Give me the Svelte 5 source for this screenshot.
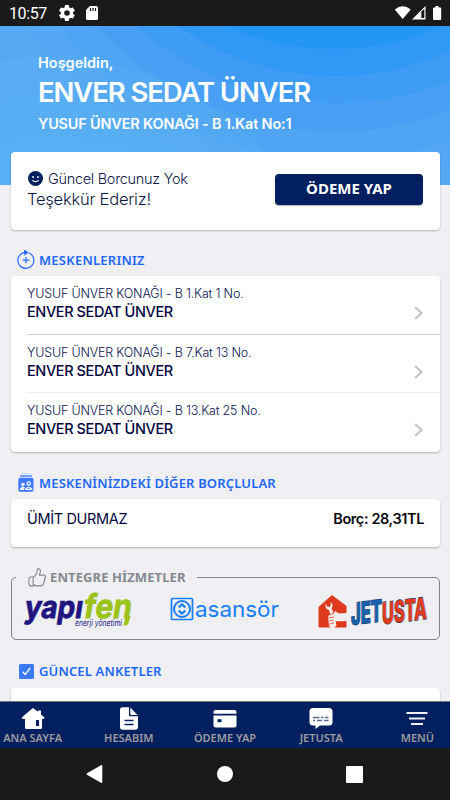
<script lang="ts">
	type Home = { id: number; address: string; owner: string };

	const homes: Home[] = [
		{ id: 1, address: 'YUSUF ÜNVER KONAĞI - B 1.Kat 1 No.', owner: 'ENVER SEDAT ÜNVER' },
		{ id: 2, address: 'YUSUF ÜNVER KONAĞI - B 7.Kat 13 No.', owner: 'ENVER SEDAT ÜNVER' },
		{ id: 3, address: 'YUSUF ÜNVER KONAĞI - B 13.Kat 25 No.', owner: 'ENVER SEDAT ÜNVER' }
	];

	const tabs = [
		{ icon: 'home', label: 'ANA SAYFA' },
		{ icon: 'file', label: 'HESABIM' },
		{ icon: 'card', label: 'ÖDEME YAP' },
		{ icon: 'chat', label: 'JETUSTA' },
		{ icon: 'menu', label: 'MENÜ' }
	];
</script>

<div class="phone">
	<div class="status">
		<span class="status__time">10:57</span>
		<svg class="status__gear" width="16" height="16" viewBox="2 2 20 20">
			<path fill="#fff" fill-rule="evenodd" d="M19.4 13a7.500 7.500 0 0 0 0-2l2.100-1.600a.5.500 0 0 0 .1-.6l-2-3.500a.5.500 0 0 0-.6-.2l-2.500 1a7.300 7.300 0 0 0-1.700-1l-.4-2.600a.5.500 0 0 0-.5-.5h-4a.5.500 0 0 0-.5.500L9 5.100a7.700 7.700 0 0 0-1.700 1l-2.500-1a.5.500 0 0 0-.6.200l-2 3.500a.5.500 0 0 0 .1.600L4.500 11a8 8 0 0 0 0 2l-2.200 1.600a.5.500 0 0 0-.1.600l2 3.500a.5.500 0 0 0 .6.200l2.500-1a7.300 7.300 0 0 0 1.700 1l.4 2.600a.5.500 0 0 0 .5.500h4a.5.500 0 0 0 .5-.5l.4-2.600a7.700 7.700 0 0 0 1.700-1l2.500 1a.5.500 0 0 0 .6-.2l2-3.500a.5.500 0 0 0-.1-.6zM12 15.500a3.500 3.500 0 1 1 0-7 3.500 3.500 0 0 1 0 7z" />
		</svg>
		<svg class="status__sd" width="12" height="14" viewBox="0 0 12 14">
			<path fill="#fff" d="M4 0h6.500Q12 0 12 1.500v11q0 1.500-1.500 1.500h-9Q0 14 0 12.500V4z" />
			<path d="M4.500 2v3M7 2v3M9.500 2v3" stroke="#1a1a1a" stroke-width="1.200" />
		</svg>
		<svg class="status__signal" width="50" height="16" viewBox="0 0 50 16">
			<path fill="#fff" d="M.8 4.600Q8.700-2.300 16.700 4.600L8.700 14z" />
			<path fill="#fff" d="M31.500 1v13.500H18z" />
			<path fill="#1a1a1a" d="M27.300 6.500l3-2.500v9h-3z" />
			<path fill="#fff" d="M41.500 1h3v1.500h1.700q1 0 1 1V14q0 1-1 1H40q-1 0-1-1V3.500q0-1 1-1h1.500z" />
		</svg>
	</div>

	<header class="hero">
		<svg class="hero__waves" viewBox="0 26 450 159" preserveAspectRatio="none">
			<rect y="26" width="450" height="159" fill="#55a9f3" />
			<circle cx="340" cy="-200" r="386" fill="#54a7f3" />
			<circle cx="338" cy="-200" r="359" fill="#4fa4f3" />
			<circle cx="337" cy="-200" r="331" fill="#489ff3" />
			<circle cx="337" cy="-200" r="303" fill="#3e9cf4" />
			<circle cx="336" cy="-200" r="276" fill="#3099f5" />
			<circle cx="334" cy="-215" r="264" fill="#2395f3" />
			<g fill="#5cb5f5" fill-opacity=".28">
				<circle cx="45" cy="357" r="300" />
				<circle cx="48" cy="397" r="298" />
				<circle cx="50" cy="437" r="297" />
			</g>
		</svg>
		<p class="hero__hello">Hoşgeldin,</p>
		<h1 class="hero__name">ENVER SEDAT ÜNVER</h1>
		<p class="hero__address">YUSUF ÜNVER KONAĞI - B 1.Kat No:1</p>
	</header>

	<main class="content">
		<section class="card debt">
			<div>
				<p class="debt__line">
					<svg width="15" height="15" viewBox="0 0 15 15">
						<circle cx="7.500" cy="7.500" r="7.500" fill="#04205e" />
						<circle cx="5" cy="6" r=".9" fill="#fff" />
						<circle cx="10" cy="6" r=".9" fill="#fff" />
						<path d="M4.300 9.400q3.200 2.600 6.400 0" fill="none" stroke="#fff" stroke-width="1.100" />
					</svg>
					<span>Güncel Borcunuz Yok</span>
				</p>
				<p class="debt__thanks">Teşekkür Ederiz!</p>
			</div>
			<button class="debt__pay">ÖDEME YAP</button>
		</section>

		<h2 class="heading heading--homes">
			<svg width="18" height="19" viewBox="0 0 18 19" fill="none" stroke="#2c6bf5" stroke-width="1.200">
				<path d="M11.500 2.800A8 8 0 1 1 6 2.900l3-.6" />
				<path d="M9 7v6.500M5.700 10.200h6.600" />
				<path d="M7.500 .5L10.500 2.300 8 4.500z" fill="#2c6bf5" />
			</svg>
			<span>MESKENLERINIZ</span>
		</h2>
		<ul class="card homes">
			{#each homes as home (home.id)}
				<li class="home">
					<div>
						<p class="home__address">{home.address}</p>
						<p class="home__owner">{home.owner}</p>
					</div>
					<svg width="10" height="14" viewBox="0 0 10 14">
						<path d="M1.200 1l6.300 6-6.300 6" fill="none" stroke="#c3c4c9" stroke-width="2.200" />
					</svg>
				</li>
			{/each}
		</ul>

		<h2 class="heading heading--debtors">
			<svg width="16" height="19" viewBox="0 0 16 19">
				<path d="M3.500 .8h9" stroke="#bcd2fb" stroke-width="1" />
				<path d="M2 3h12" stroke="#3c7af8" stroke-width="1.300" />
				<rect x=".3" y="4.800" width="15.200" height="14" rx="1.800" fill="#3c7af8" />
				<g fill="#eef3ff">
					<circle cx="5" cy="11.600" r="1.800" />
					<circle cx="10.700" cy="10.600" r="2.300" />
					<path d="M1.600 17q.3-3 3.300-3.200 1.400 0 2 .7-1 1-1 2.500zM6.800 17q.4-3 3.900-3t3.900 3z" />
				</g>
				<circle cx="10.700" cy="10.600" r="1" fill="#3c7af8" />
				<path d="M8.700 16q1.800-1.300 4 0z" fill="#3c7af8" />
			</svg>
			<span>MESKENİNİZDEKİ DİĞER BORÇLULAR</span>
		</h2>
		<section class="card debtor">
			<span class="debtor__name">ÜMİT DURMAZ</span>
			<span class="debtor__sum">Borç: 28,31TL</span>
		</section>

		<section class="services">
			<h2 class="services__title">
				<svg width="18" height="19" viewBox="0 0 18 19" fill="none" stroke="#858d93" stroke-width="1.200" stroke-linejoin="round">
					<path d="M5.300 9.200Q9 6.500 9.300 1.700 9.600.5 10.900.7q2 .6 1.400 3.500l-.9 3h4.300q1.800.2 1.700 1.800-.2.900-.8 1.200.7 1.700-.4 2.600.4 1.700-.9 2.500.1 2.300-2.200 2.500H9q-2.200-.1-3.900-1.600z" />
					<path d="M5 9H2.200Q.8 9.300.8 13.500t1.900 4.700h2.600l.7-1.200" />
				</svg>
				<span>ENTEGRE HİZMETLER</span>
			</h2>
			<div class="services__logos">
				<svg width="110" height="38" viewBox="0 0 110 38" class="brand brand--yapifen">
					<g transform="skewX(-9)" font-weight="700" stroke-width=".8">
						<text x="5" y="28" font-size="31" textLength="58" lengthAdjust="spacingAndGlyphs" fill="#20147f" stroke="#20147f">yapı</text>
						<text x="64" y="28" font-size="33" textLength="48" lengthAdjust="spacingAndGlyphs" fill="#9bc31a" stroke="#9bc31a">fen</text>
					</g>
					<path d="M102.500 26h5l-2 7q-1 3-5 2.700z" fill="#9bc31a" />
					<text x="52" y="35.500" font-size="8.500" font-style="italic" textLength="47" lengthAdjust="spacingAndGlyphs" fill="#20147f">enerji yönetimi</text>
				</svg>
				<svg width="110" height="28" viewBox="0 0 110 28" class="brand brand--asansor">
					<g fill="none" stroke="#1780f8">
						<rect x="1.500" y="1.500" width="21" height="21" rx=".8" stroke-width="1.700" />
						<circle cx="12" cy="12" r="8" stroke-width="2" />
						<path d="M8.700 10.300L12 7.400l3.300 2.900M8.700 13.700l3.300 2.900 3.300-2.900" stroke-width="2.200" />
					</g>
					<text x="25" y="20" font-size="22" textLength="84" lengthAdjust="spacingAndGlyphs" fill="#1780f8">asansör</text>
				</svg>
				<svg width="122" height="60" viewBox="0 -14 122 60" class="brand brand--jetusta">
					<path d="M1.500 14L15 2l14.500 11v7l-7.500.5-4-2.500-2 4.500 6 5.500h7.500v5.500q0 1-1 1H2.500q-1 0-1-1z" fill="#df3a1d" />
					<path d="M8.500 9.500l1.500 4 3 .5 1-3.500-1-1q3 .3 2.500 4l-1 1.500 2 5q4 1 5 3l8 0v5q-7 .5-11 0l1 4-3 4-4-2-1-6-.2-5 2-2-1.500-4q-4.500-1.500-2.800-7z" fill="#f4eeee" />
					<path d="M12 22l5-2M12 25l5-1M12.500 28l4-1M13 31l4-1" stroke="#df3a1d" stroke-width=".8" />
					<g transform="translate(34 32) skewY(-7)" font-weight="800" stroke="#142c60" stroke-width="1.200" paint-order="stroke">
						<text x="0" y="0" font-size="30" textLength="31" lengthAdjust="spacingAndGlyphs" fill="#1562ad">JET</text>
						<text x="31" y="3" font-size="30" textLength="45" lengthAdjust="spacingAndGlyphs" fill="#e23b1c">USTA</text>
					</g>
				</svg>
			</div>
		</section>

		<h2 class="heading heading--polls">
			<svg width="15" height="15" viewBox="0 0 15 15">
				<rect width="15" height="15" rx="1.500" fill="#3c7af8" />
				<path d="M3.700 7.800l2.500 2.700 5-6.500" fill="none" stroke="#fff" stroke-width="1.300" />
			</svg>
			<span>GÜNCEL ANKETLER</span>
		</h2>
		<section class="card polls"></section>
	</main>

	<nav class="tabs">
		{#each tabs as tab (tab.icon)}
			<button class="tab">
				<svg width="24" height="24" viewBox="0 0 24 24" fill="#fff">
					{#if tab.icon === 'home'}
						<path d="M12 1l5 3.800V3.500h3v4l3.500 3-.8 1.500H21v8.700q0 1.300-1.300 1.300H5.300Q4 22 4 20.700V12H1.500L.7 10.500 11 1.700z" />
						<path d="M15 13h3v6h-3z" fill="#02205f" />
					{:else if tab.icon === 'file'}
						<path d="M5.500.3H12v8q0 1 1 1h8V20q0 2.700-2.500 2.700h-13Q3 22.700 3 20V3Q3 .3 5.500.3z" />
						<path d="M13.300.6l7.200 7.400h-6.200q-1 0-1-1z" />
						<path d="M8 13.500h8M8 17.500h8" stroke="#02205f" stroke-width="1.300" stroke-linecap="round" />
					{:else if tab.icon === 'card'}
						<path d="M2.500 3h19q2 0 2 2v1.800H.5V5q0-2 2-2zM.5 8.500h23v10q0 2-2 2h-19q-2 0-2-2z" />
						<path d="M4.500 12.200h4v3h-4z" fill="#02205f" />
					{:else if tab.icon === 'chat'}
						<path d="M4 1h16q3.500 0 3.500 3.500V15q0 3.500-3.500 3.500h-9L6.500 22V18.500H4Q.5 18.500.5 15V4.500Q.5 1 4 1z" />
						<path d="M4 10.500h6.500M12 10.500h2.500M16 10.500h3.500M4 13.500h2M8 13.500h5M15 13.500h4.500" stroke="#56688f" stroke-width="1.300" />
					{:else}
						<path d="M1.500 6h21M4 11.500h16M6 17h12" stroke="#f0eef8" stroke-width="2" />
					{/if}
				</svg>
				<span>{tab.label}</span>
			</button>
		{/each}
	</nav>

	<div class="system">
		<svg width="18" height="20" viewBox="0 0 18 20"><path d="M1 9.300L15 1.300q1.300-.7 1.300 .7v16q0 1.500-1.300.7L1 10.700q-1-.7 0-1.400z" fill="#fff" /></svg>
		<span class="system__home"></span>
		<span class="system__recent"></span>
	</div>
</div>

<style>
	:global(body) {
		margin: 0;
		background: #efeff4;
	}

	.phone {
		display: flex;
		flex-direction: column;
		width: 450px;
		height: 800px;
		overflow: hidden;
		background: #efeff4;
		font-family: Inter, sans-serif;
		color: #04083f;
		white-space: nowrap;
	}

	.phone * {
		box-sizing: border-box;
	}

	p,
	h1,
	h2,
	ul {
		margin: 0;
		padding: 0;
	}

	svg {
		flex: none;
		display: block;
	}

	button {
		border: 0;
		padding: 0;
	}

	.status {
		flex: none;
		display: flex;
		align-items: center;
		height: 26px;
		padding: 0 9px;
		background: #1a1a1a;
		color: #fff;
		font: 16px/26px Roboto, sans-serif;
	}

	.status__time {
		width: 50px;
		padding-top: 2px;
		letter-spacing: -0.4px;
	}

	.status__sd {
		margin-left: 11px;
	}

	.status__signal {
		margin-left: auto;
		margin-right: -3px;
	}

	.hero {
		position: relative;
		flex: none;
		height: 159px;
		padding: 27px 38px 0;
		color: #fff;
	}

	.hero__waves {
		position: absolute;
		inset: 0;
		width: 450px;
		height: 159px;
	}

	.hero p,
	.hero h1 {
		position: relative;
	}

	.hero__hello {
		font-size: 14.5px;
		font-weight: 600;
		line-height: 20px;
	}

	.hero__name {
		margin-top: 2px;
		font-size: 27.5px;
		font-weight: 600;
		line-height: 34px;
		letter-spacing: -1.1px;
	}

	.hero__address {
		margin-top: 5px;
		font-size: 14.5px;
		font-weight: 600;
		line-height: 20px;
		letter-spacing: -0.2px;
	}

	.content {
		position: relative;
		flex: 1;
		min-height: 0;
		margin-top: -33px;
		padding: 0 10px 0 11px;
		overflow: hidden;
	}

	.card {
		background: #fff;
		border-radius: 4px;
		box-shadow: 0 1px 2px rgba(0, 0, 0, 0.25);
	}

	.debt {
		display: flex;
		justify-content: space-between;
		height: 78px;
		padding: 15px 17px 0 16px;
		font-weight: 300;
		color: #0b1745;
	}

	.debt__line {
		display: flex;
		align-items: center;
		gap: 5px;
		padding-left: 1px;
		height: 22px;
		font-size: 14.5px;
		letter-spacing: -0.3px;
	}

	.debt__thanks {
		font-size: 16.5px;
		line-height: 21px;
		letter-spacing: -0.22px;
	}

	.debt__pay {
		width: 148px;
		height: 31px;
		margin-top: 7px;
		padding-bottom: 3px;
		border-radius: 4px;
		background: #02205f;
		box-shadow: 0 1px 1px rgba(0, 0, 0, 0.3);
		color: #fff;
		font: 700 15px 'Noto Sans', sans-serif;
	}

	.heading,
	.services__title {
		display: flex;
		align-items: center;
		font: 600 13px/20px 'Noto Sans', sans-serif;
		color: #1c67f6;
		letter-spacing: 0.15px;
	}

	.heading {
		gap: 5px;
		padding-left: 7px;
	}

	.heading--homes {
		height: 46px;
		padding-top: 13px;
		gap: 4px;
		padding-left: 6px;
		letter-spacing: 0.25px;
	}

	.homes {
		height: 176px;
		list-style: none;
	}

	.home {
		display: flex;
		justify-content: space-between;
		height: 58.6px;
		margin-left: 16px;
		padding: 9px 16px 0 0;
		border-bottom: 1px solid #ededf0;
	}

	.home svg {
		margin-top: 21px;
	}

	.home:first-child {
		border-color: #ccccd2;
	}

	.home:last-child {
		border: 0;
	}

	.home__address {
		font-size: 12.5px;
		font-weight: 300;
		line-height: 18px;
		letter-spacing: -0.18px;
		color: #0a1650;
	}

	.home__owner {
		font-size: 14.5px;
		font-weight: 500;
		line-height: 18px;
		letter-spacing: -0.4px;
	}

	.heading--debtors {
		height: 47px;
		padding-top: 14px;
	}

	.debtor {
		display: flex;
		justify-content: space-between;
		height: 48px;
		padding: 9px 16px 0 16px;
		font-size: 14.5px;
		line-height: 22px;
		letter-spacing: -0.35px;
	}

	.debtor__sum {
		font-weight: 600;
		letter-spacing: -0.4px;
		color: #08080c;
	}

	.services {
		height: 63px;
		margin-top: 30px;
		border: 1px solid #7e858b;
		border-radius: 5px;
	}

	.services__title {
		width: 181px;
		height: 20px;
		gap: 4px;
		margin: -11px 0 0 4px;
		padding-left: 12px;
		background: #efeff4;
		color: #83898e;
		font-weight: 700;
		letter-spacing: 0.1px;
	}

	.services__logos {
		display: flex;
		align-items: flex-start;
		justify-content: space-between;
		padding: 2px 0 0 11px;
	}

	.brand {
		font-family: Inter, sans-serif;
		overflow: visible;
	}

	.brand--yapifen {
		margin-top: 1px;
	}

	.brand--asansor {
		margin-top: 8px;
	}

	.brand--jetusta {
		margin-top: -10px;
		margin-bottom: -10px;
	}

	.heading--polls {
		height: 48px;
		padding-top: 14px;
		gap: 5px;
		padding-left: 8px;
	}

	.polls {
		height: 60px;
	}

	.tabs {
		position: relative;
		flex: none;
		display: grid;
		grid-template-columns: repeat(5, 96.2px);
		justify-content: center;
		height: 47px;
		border-top: 1px solid #75777d;
		background: #02205f;
	}

	.tab {
		display: flex;
		flex-direction: column;
		align-items: center;
		padding-top: 5px;
		background: none;
		font: 600 11px/13px 'Noto Sans', sans-serif;
		color: #9c9a9d;
	}

	.system {
		flex: none;
		display: flex;
		align-items: center;
		justify-content: center;
		gap: 113px;
		height: 52px;
		padding-right: 2px;
		background: #1a1a1a;
	}

	.system__home {
		width: 16px;
		height: 16px;
		border-radius: 50%;
		background: #fff;
	}

	.system__recent {
		width: 17px;
		height: 17px;
		border-radius: 1px;
		background: #fff;
	}
</style>
